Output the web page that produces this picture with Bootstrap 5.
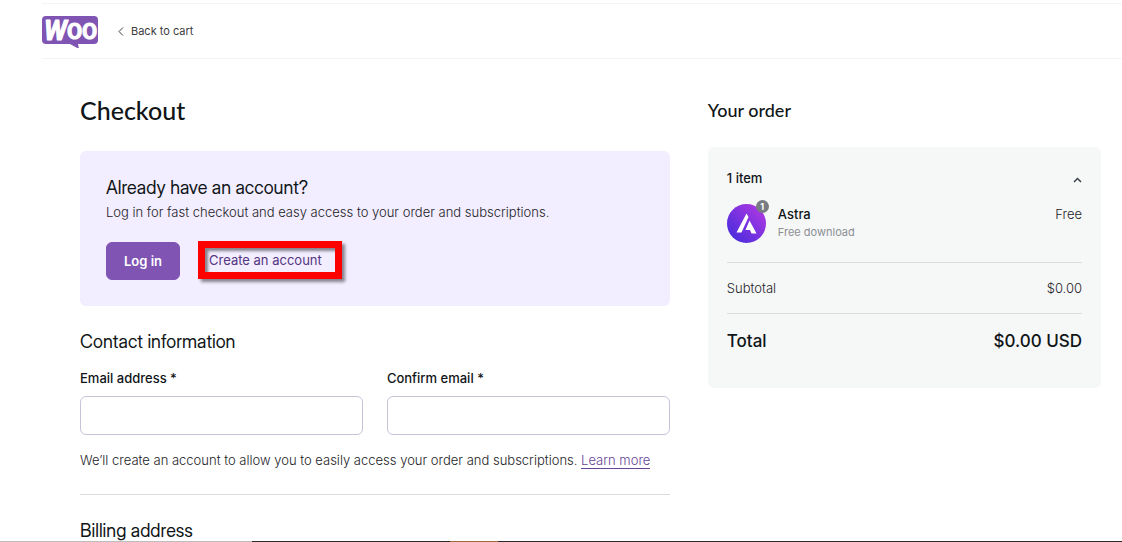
<!DOCTYPE html>
<html lang="en">
<head>
<meta charset="utf-8">
<meta name="viewport" content="width=device-width, initial-scale=1">
<title>Checkout</title>
<link href="https://cdn.jsdelivr.net/npm/bootstrap@5.3.0/dist/css/bootstrap.min.css" rel="stylesheet">
<style>
  body { font-family: Inter, "Liberation Sans", sans-serif; font-size: 13px; font-weight: 300; line-height: 20px; color: #1d2327; overflow-x: hidden; }
  .site-header { margin: 3px 0 0 42px; padding: 10px 0; border-top: 1px solid #f4f4f5; border-bottom: 1px solid #f4f4f5; gap: 19px; }
  .back-link { font-size: 11px; font-weight: 400; color: #3c3c3c; gap: 7px; }
  .checkout-grid { display: grid; grid-template-columns: minmax(0, 3fr) minmax(0, 2fr); column-gap: 38px; padding: 35px 21px 0 80px; }
  .display-title { font-family: Lato, sans-serif; font-weight: 500; color: #101517; line-height: 32px; }
  h1.display-title { font-size: 25px; margin-bottom: 25px; }
  h2.display-title { font-size: 18px; margin-bottom: 21px; }
  .section-title { font-family: "Inter Display", Inter, sans-serif; font-size: 18px; line-height: 24px; font-weight: 400; color: #101517; }
  .account-panel { background: #f2edff; border-radius: 6px; padding: 25px 26px 26px; }
  .panel-text { padding: 2px 0; }
  .actions { gap: 18px; margin-top: 18px; }
  .login-btn { --bs-btn-color: #fff; --bs-btn-bg: #7f54b3; --bs-btn-border-color: #7f54b3; --bs-btn-hover-color: #fff; --bs-btn-hover-bg: #6c4399; --bs-btn-font-size: 13px; --bs-btn-font-weight: 600; --bs-btn-line-height: 20px; --bs-btn-padding-y: 8px; --bs-btn-padding-x: 17px; --bs-btn-border-radius: 6px; }
  .callout-frame { border: 7px solid #f00; padding: 0 13px 0 4px; height: 38px; margin-top: -1px; box-shadow: 3px 3px 3px rgba(0,0,0,.45), inset 3px 3px 3px rgba(0,0,0,.45); }
  .callout-frame a { color: #533582; font-weight: 400; }
  .form-label { font-weight: 500; color: #101517; margin-bottom: 8px; line-height: 20px; }
  .form-control { height: 39px; border-color: #c7c3d9; border-radius: 6px; font-size: 13px; }
  .form-heading { margin: 24px 0 14px; }
  .form-note { margin: 15px 0 24px; }
  .more-link { color: #674399; border-bottom: 1px solid #674399; }
  .rule { border-top: 1px solid #dcdcde; }
  .order-panel { background: #f6f7f7; border-radius: 6px; padding: 21px 19px 35px; }
  .ink { color: #101517; }
  .fw-mid { font-weight: 500; }
  .item-row { gap: 12px; padding: 16px 0 19px; }
  .sum-row { padding: 15px 0; }
  .qty { position: absolute; top: -4px; right: -3px; width: 13px; height: 13px; font-size: 9px; line-height: 13px; font-weight: 700; background: #787c82; color: #fff; }
  .note { font-size: 11px; line-height: 16px; font-weight: 400; color: #8c8f94; }
  .total-line { font-size: 17px; line-height: 24px; font-weight: 500; color: #101517; padding-top: 15px; }
  .edge { height: 1px; background: linear-gradient(90deg, #bdbdbd 252px, #2b2b2b 252px 450px, #a0683c 450px 498px, #2b2b2b 498px); }
</style>
</head>
<body>
<header class="site-header d-flex align-items-center">
  <a href="#" class="d-block" aria-label="Woo">
    <svg class="d-block" width="57" height="34" viewBox="0 0 57 34">
      <path d="M4 2h48q4 0 4 4v20q0 4-4 4H36l1 5-9-5H4q-4 0-4-4V6q0-4 4-4z" fill="#7f54b3"/>
      <text font-family="Roboto, sans-serif" font-weight="700" fill="#fff" stroke="#fff" stroke-width="1" stroke-linejoin="round"><tspan x="2" y="26" font-size="27" font-style="italic">W</tspan><tspan x="25" y="25" font-size="22">O</tspan><tspan x="40" y="25" font-size="22">O</tspan></text>
    </svg>
  </a>
  <a href="#" class="back-link d-flex align-items-center text-decoration-none">
    <svg width="6" height="9" viewBox="0 0 6 9" fill="none" stroke="#3c3c3c"><path d="M5 .5 1 4.500l4 4"/></svg>
    Back to cart
  </a>
</header>

<main class="checkout-grid">
  <section>
    <h1 class="display-title">Checkout</h1>
    <div class="account-panel">
      <h2 class="section-title mb-0">Already have an account?</h2>
      <p class="panel-text mb-0">Log in for fast checkout and easy access to your order and subscriptions.</p>
      <div class="actions d-flex align-items-start">
        <button type="button" class="btn login-btn">Log in</button>
        <div class="callout-frame d-flex align-items-center"><a href="#" class="text-decoration-none">Create an account</a></div>
      </div>
    </div>

    <h2 class="section-title form-heading">Contact information</h2>
    <div class="row gx-4">
      <div class="col-6">
        <label class="form-label" for="email">Email address *</label>
        <input type="email" class="form-control" id="email">
      </div>
      <div class="col-6">
        <label class="form-label" for="confirm">Confirm email *</label>
        <input type="email" class="form-control" id="confirm">
      </div>
    </div>
    <p class="form-note">We’ll create an account to allow you to easily access your order and subscriptions. <a href="#" class="more-link text-decoration-none">Learn more</a></p>
    <div class="rule"></div>
    <h2 class="section-title mt-4 mb-0">Billing address</h2>
  </section>

  <aside>
    <h2 class="display-title">Your order</h2>
    <div class="order-panel">
      <div class="d-flex justify-content-between align-items-center">
        <span class="fw-mid ink">1 item</span>
        <button type="button" class="btn p-0 pt-1 border-0 lh-1" aria-label="Collapse order">
          <svg class="d-block" width="9" height="6" viewBox="0 0 9 6" fill="none" stroke="#3c434a" stroke-width="1.500"><path d="m1 5 3.500-3.500L8 5"/></svg>
        </button>
      </div>
      <div class="item-row d-flex">
        <div class="position-relative">
          <svg class="d-block" width="39" height="39" viewBox="0 0 39 39">
            <defs><linearGradient id="astra" x1="0" y1="1" x2="1" y2="0"><stop offset=".1" stop-color="#492cdd"/><stop offset=".9" stop-color="#ad38e2"/></linearGradient></defs>
            <circle cx="19.500" cy="19.500" r="19.500" fill="url(#astra)"/>
            <path d="M19.500 9.500 21.500 13 14.500 28.500H9.500zM22.500 16.500 29.500 29.500H24.500L23 26H18.500z" fill="#fff"/>
          </svg>
          <span class="qty rounded-circle text-center">1</span>
        </div>
        <div class="flex-grow-1">
          <div class="fw-mid ink">Astra</div>
          <div class="note">Free download</div>
        </div>
        <div>Free</div>
      </div>
      <div class="rule"></div>
      <div class="sum-row d-flex justify-content-between"><span>Subtotal</span><span>$0.00</span></div>
      <div class="rule"></div>
      <div class="total-line d-flex justify-content-between"><span>Total</span><span>$0.00 USD</span></div>
    </div>
  </aside>
</main>
<div class="edge fixed-bottom"></div>
<script src="https://cdn.jsdelivr.net/npm/bootstrap@5.3.0/dist/js/bootstrap.bundle.min.js"></script>
</body>
</html>
